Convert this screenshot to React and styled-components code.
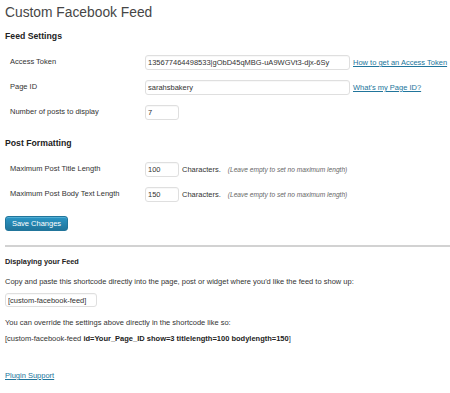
import React from "react";
import styled, { createGlobalStyle } from "styled-components";

const GlobalStyle = createGlobalStyle`
  body {
    margin: 0;
    background: #ffffff;
    font-family: "Liberation Sans", Arial, sans-serif;
    color: #333333;
  }
`;

const Wrap = styled.div`
  width: 450px;
  height: 393px;
  padding: 0 0 0 5px;
  box-sizing: border-box;
  font-size: 7.5px;
  overflow: hidden;
`;

const PageTitle = styled.h2`
  margin: 4px 0 0;
  font-size: 13.8px;
  line-height: 17px;
  font-weight: normal;
  color: #464646;
`;

const SectionTitle = styled.h3`
  margin: ${(p) => p.$top}px 0 0;
  font-size: 8.7px;
  line-height: 11px;
  font-weight: bold;
  color: #222;
`;

const FormTable = styled.div`
  display: grid;
  grid-template-columns: 140px 1fr;
  row-gap: 10px;
  margin-top: ${(p) => p.$top}px;
`;

const Label = styled.div`
  padding-left: 5px;
  height: 15px;
  line-height: 14px;
  color: #333;
`;

const Field = styled.div`
  display: flex;
  align-items: center;
  gap: 3px;
  height: 15px;
`;

const Input = styled.input`
  box-sizing: border-box;
  width: ${(p) => p.$w}px;
  height: ${(p) => p.$h || 15}px;
  padding: 0 2px;
  border: 1px solid #dfdfdf;
  border-radius: 3px;
  background: #fff;
  font-family: inherit;
  font-size: 7.5px;
  color: #333;
  outline: none;
  box-shadow: inset 0 1px 1px rgba(0, 0, 0, 0.03);
`;

const Link = styled.a`
  color: #21759b;
  text-decoration: underline;
  font-size: 7.5px;
`;

const Note = styled.span`
  font-style: italic;
  font-size: 6.6px;
  color: #666;
  margin-left: 4px;
`;

const SaveButton = styled.button`
  display: block;
  margin-top: 14px;
  width: 63px;
  height: 15px;
  padding: 0;
  border: 1px solid #21759b;
  border-radius: 3px;
  background: linear-gradient(to bottom, #2a95c5, #21759b);
  color: #fff;
  font-family: inherit;
  font-size: 7.5px;
  line-height: 13px;
  box-shadow: inset 0 1px 0 rgba(120, 200, 230, 0.5);
`;

const Divider = styled.div`
  margin-top: 14px;
  height: 2px;
  background: #d2d2d2;
`;

const SubTitle = styled.h4`
  margin: 9px 0 0;
  font-size: 7.3px;
  line-height: 11px;
  font-weight: bold;
  color: #222;
`;

const Para = styled.p`
  margin: ${(p) => p.$top}px 0 0;
  line-height: 11px;
  color: #333;
`;

const Code = styled.p`
  margin: 5px 0 0;
  line-height: 11px;
  color: #333;
  b {
    color: #222;
  }
`;

const Block = styled.div`
  margin-top: ${(p) => p.$top}px;
`;

const App = () => {
  return (
    <Wrap>
      <GlobalStyle />
      <PageTitle>Custom Facebook Feed</PageTitle>
      <SectionTitle $top={10}>Feed Settings</SectionTitle>
      <FormTable $top={13}>
        <Label>Access Token</Label>
        <Field>
          <Input $w={205} defaultValue="135677464498533|gObD45qMBG-uA9WGVt3-djx-6Sy" readOnly />
          <Link href="#">How to get an Access Token</Link>
        </Field>
        <Label>Page ID</Label>
        <Field>
          <Input $w={205} defaultValue="sarahsbakery" readOnly />
          <Link href="#">What's my Page ID?</Link>
        </Field>
        <Label>Number of posts to display</Label>
        <Field>
          <Input $w={34} defaultValue="7" readOnly />
        </Field>
      </FormTable>

      <SectionTitle $top={18}>Post Formatting</SectionTitle>
      <FormTable $top={13}>
        <Label>Maximum Post Title Length</Label>
        <Field>
          <Input $w={34} defaultValue="100" readOnly />
          <span>Characters.</span>
          <Note>(Leave empty to set no maximum length)</Note>
        </Field>
        <Label>Maximum Post Body Text Length</Label>
        <Field>
          <Input $w={34} defaultValue="150" readOnly />
          <span>Characters.</span>
          <Note>(Leave empty to set no maximum length)</Note>
        </Field>
      </FormTable>

      <SaveButton>Save Changes</SaveButton>
      <Divider />

      <SubTitle>Displaying your Feed</SubTitle>
      <Para $top={9}>
        Copy and paste this shortcode directly into the page, post or widget where you'd like the feed to show up:
      </Para>
      <Block $top={6}>
        <Input $w={92} $h={14} defaultValue="[custom-facebook-feed]" readOnly />
      </Block>
      <Para $top={10}>You can override the settings above directly in the shortcode like so:</Para>
      <Code>
        [custom-facebook-feed <b>id=Your_Page_ID show=3 titlelength=100 bodylength=150</b>]
      </Code>
      <Para $top={26}>
        <Link href="#">Plugin Support</Link>
      </Para>
    </Wrap>
  );
};

export default App;
